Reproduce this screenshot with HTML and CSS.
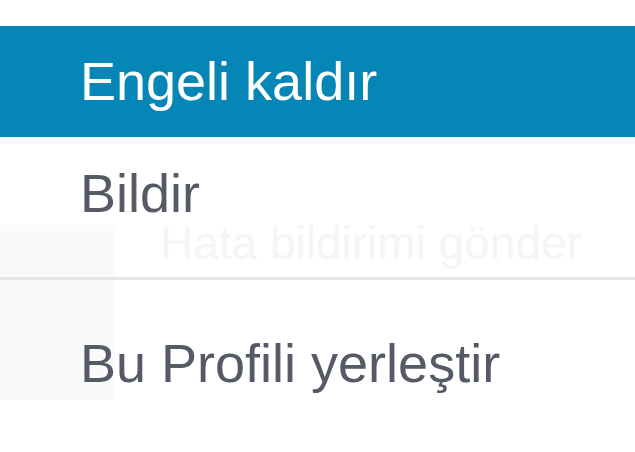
FILE: index.html
```html
<!DOCTYPE html>
<html lang="tr">
<head>
<meta charset="utf-8">
<link rel="stylesheet" href="styles.css">
</head>
<body>
<div class="page">
  <div class="ghost-box"></div>
  <div class="ghost-text">Hata bildirimi gönder</div>
  <ul class="menu">
    <li class="item active">Engeli kaldır</li>
    <li class="item report">Bildir</li>
    <li class="divider"></li>
    <li class="item embed">Bu Profili yerleştir</li>
  </ul>
</div>
</body>
</html>
```
FILE: styles.css
```css
html, body {
  margin: 0;
  padding: 0;
  background: #ffffff;
}
.page {
  position: relative;
  width: 635px;
  height: 452px;
  overflow: hidden;
  font-family: "Liberation Sans", Arial, sans-serif;
}
.ghost-box {
  position: absolute;
  left: 0;
  top: 225px;
  width: 115px;
  height: 175px;
  background: #fafafa;
}
.ghost-text {
  position: absolute;
  left: 160px;
  top: 216px;
  font-size: 46px;
  line-height: 54px;
  color: #f5f5f5;
  white-space: nowrap;
}
.menu {
  position: relative;
  list-style: none;
  margin: 0;
  padding: 26px 0 0 0;
}
.item {
  font-size: 54px;
  line-height: 111px;
  padding-left: 80px;
  color: #555a66;
  white-space: nowrap;
}
.item.active {
  background: #0586b6;
  color: #ffffff;
}
.item.report {
  line-height: 112px;
  margin-bottom: 28px;
}
.divider {
  height: 3px;
  background: #e6e6e6;
}
.item.embed {
  padding-top: 27px;
  line-height: 112px;
}
```
